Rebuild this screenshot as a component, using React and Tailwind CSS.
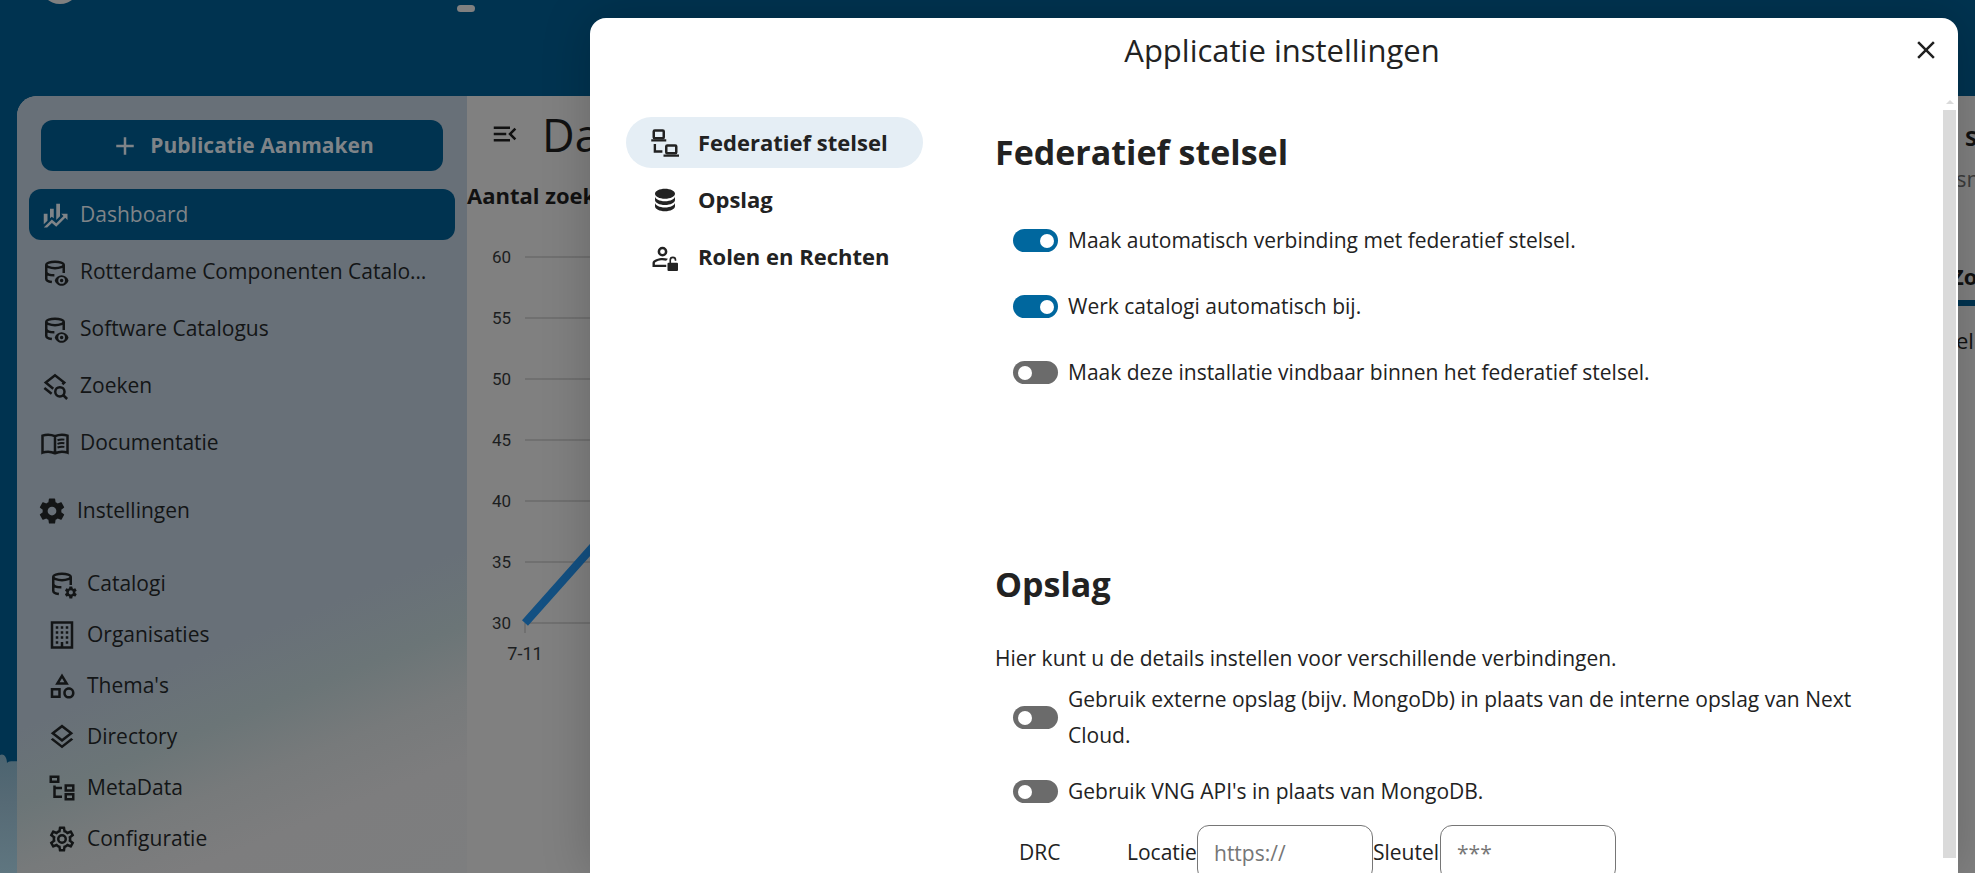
import React from "react";

const P = {
  finance: "M6,16.5L3,19.44V11H6M11,14.66L9.43,13.32L8,14.64V7H11M16,13L13,16V3H16M18.81,12.81L17,11H22V16L20.21,14.21L13,21.36L9.53,18.34L5.75,22H3L9.47,15.66L13,18.64",
  cog: "M12,15.5A3.5,3.5 0 0,1 8.5,12A3.5,3.5 0 0,1 12,8.5A3.5,3.5 0 0,1 15.5,12A3.5,3.5 0 0,1 12,15.5M19.43,12.97C19.47,12.65 19.5,12.33 19.5,12C19.5,11.67 19.47,11.34 19.43,11L21.54,9.37C21.73,9.22 21.78,8.95 21.66,8.73L19.66,5.27C19.54,5.05 19.27,4.96 19.05,5.05L16.56,6.05C16.04,5.66 15.5,5.32 14.87,5.07L14.5,2.42C14.46,2.18 14.25,2 14,2H10C9.75,2 9.54,2.18 9.5,2.42L9.13,5.07C8.5,5.32 7.96,5.66 7.44,6.05L4.95,5.05C4.73,4.96 4.46,5.05 4.34,5.27L2.34,8.73C2.21,8.95 2.27,9.22 2.46,9.37L4.57,11C4.53,11.34 4.5,11.67 4.5,12C4.5,12.33 4.53,12.65 4.57,12.97L2.46,14.63C2.27,14.78 2.21,15.05 2.34,15.27L4.34,18.73C4.46,18.95 4.73,19.03 4.95,18.95L7.44,17.94C7.96,18.34 8.5,18.68 9.13,18.93L9.5,21.58C9.54,21.82 9.75,22 10,22H14C14.25,22 14.46,21.82 14.5,21.58L14.87,18.93C15.5,18.67 16.04,18.34 16.56,17.94L19.05,18.95C19.27,19.03 19.54,18.95 19.66,18.73L21.66,15.27C21.78,15.05 21.73,14.78 21.54,14.63L19.43,12.97Z",
  cogOutline: "M12,8A4,4 0 0,1 16,12A4,4 0 0,1 12,16A4,4 0 0,1 8,12A4,4 0 0,1 12,8M12,10A2,2 0 0,0 10,12A2,2 0 0,0 12,14A2,2 0 0,0 14,12A2,2 0 0,0 12,10M10,22C9.75,22 9.54,21.82 9.5,21.58L9.13,18.93C8.5,18.68 7.96,18.34 7.44,17.94L4.95,18.95C4.73,19.03 4.46,18.95 4.34,18.73L2.34,15.27C2.21,15.05 2.27,14.78 2.46,14.63L4.57,12.97L4.5,12L4.57,11L2.46,9.37C2.27,9.22 2.21,8.95 2.34,8.73L4.34,5.27C4.46,5.05 4.73,4.96 4.95,5.05L7.44,6.05C7.96,5.66 8.5,5.32 9.13,5.07L9.5,2.42C9.54,2.18 9.75,2 10,2H14C14.25,2 14.46,2.18 14.5,2.42L14.87,5.07C15.5,5.32 16.04,5.66 16.56,6.05L19.05,5.05C19.27,4.96 19.54,5.05 19.66,5.27L21.66,8.73C21.79,8.95 21.73,9.22 21.54,9.37L19.43,11L19.5,12L19.43,13L21.54,14.63C21.73,14.78 21.79,15.05 21.66,15.27L19.66,18.73C19.54,18.95 19.27,19.04 19.05,18.95L16.56,17.95C16.04,18.34 15.5,18.68 14.87,18.93L14.5,21.58C14.46,21.82 14.25,22 14,22H10M11.25,4L10.88,6.61C9.68,6.86 8.62,7.5 7.85,8.39L5.44,7.35L4.69,8.65L6.8,10.2C6.4,11.37 6.4,12.64 6.8,13.8L4.68,15.36L5.43,16.66L7.86,15.62C8.63,16.5 9.68,17.14 10.87,17.38L11.24,20H12.76L13.13,17.39C14.32,17.14 15.37,16.5 16.14,15.62L18.57,16.66L19.32,15.36L17.2,13.81C17.6,12.64 17.6,11.37 17.2,10.2L19.31,8.65L18.56,7.35L16.15,8.39C15.38,7.5 14.32,6.86 13.12,6.62L12.75,4H11.25Z",
  shapes: "M11,13.5V21.5H3V13.5H11M9,15.5H5V19.5H9V15.5M12,2L17.5,11H6.5L12,2M12,5.86L10.08,9H13.92L12,5.86M17.5,13C20,13 22,15 22,17.5C22,20 20,22 17.5,22C15,22 13,20 13,17.5C13,15 15,13 17.5,13M17.5,15A2.5,2.5 0 0,0 15,17.5A2.5,2.5 0 0,0 17.5,20A2.5,2.5 0 0,0 20,17.5A2.5,2.5 0 0,0 17.5,15Z",
  layers: "M12,18.54L19.37,12.8L21,14.07L12,21.07L3,14.07L4.62,12.81L12,18.54M12,16L3,9L12,2L21,9L12,16M12,4.53L6.26,9L12,13.47L17.74,9L12,4.53Z",
  tree: "M12,13H7V18H12V20H5V10H7V11H12V13M8,4V6H4V4H8M10,2H2V8H10V2M20,11V13H16V11H20M22,9H14V15H22V9M20,18V20H16V18H20M22,16H14V22H22V16Z",
  menuOpen: "M21,15.61L19.59,17L14.58,12L19.59,7L21,8.39L17.44,12L21,15.61M3,6H16V8H3V6M3,13V11H13V13H3M3,18V16H16V18H3Z",
  database: "M12,3C7.58,3 4,4.79 4,7C4,9.21 7.58,11 12,11C16.42,11 20,9.21 20,7C20,4.79 16.42,3 12,3M4,9V12C4,14.21 7.58,16 12,16C16.42,16 20,14.21 20,12V9C20,11.21 16.42,13 12,13C7.58,13 4,11.21 4,9M4,14V17C4,19.21 7.58,21 12,21C16.42,21 20,19.21 20,17V14C20,16.21 16.42,18 12,18C7.58,18 4,16.21 4,14Z",
  building: "M19 3V21H13V17.5H11V21H5V3H19M15 7H17V5H15V7M11 7H13V5H11V7M7 7H9V5H7V7M15 11H17V9H15V11M11 11H13V9H11V11M7 11H9V9H7V11M15 15H17V13H15V15M11 15H13V13H11V15M7 15H9V13H7V15M7 19H9V17H7V19M15 19H17V17H15V19M21 1H3V23H21V1Z",
  plus: "M19,13H13V19H11V13H5V11H11V5H13V11H19V13Z",
  close: "M19,6.41L17.59,5L12,10.59L6.41,5L5,6.41L10.59,12L5,17.59L6.41,19L12,13.41L17.59,19L19,17.59L13.41,12L19,6.41Z",
};

function Icon({ d, children }) {
  return (
    <svg viewBox="0 0 24 24" fill="currentColor" className="size-[30px] shrink-0" aria-hidden="true">
      {d ? <path d={d} /> : children}
    </svg>
  );
}

const barrel = (
  <g fill="none" stroke="currentColor" strokeWidth="2">
    <ellipse cx="12" cy="6.3" rx="7" ry="2.6" />
    <path d="M5 6.300v11c0 1.300 1.700 2.300 4.500 2.700M5 11.700c0 1.700 2.500 2.900 6.500 2.900M19 6.300v6.500" />
  </g>
);
const DbEye = () => (
  <Icon>
    {barrel}
    <path fillRule="evenodd" d="M17.300 14.500c-2.500 0-4.700 1.700-5.500 4.200.8 2.500 3 4.300 5.500 4.300s4.700-1.800 5.500-4.300c-.8-2.500-3-4.200-5.500-4.200m0 6.900a2.700 2.700 0 1 1 0-5.400 2.700 2.700 0 0 1 0 5.400m0-1.300a1.400 1.400 0 1 0 0-2.800 1.400 1.400 0 0 0 0 2.800" />
  </Icon>
);
const DbCog = () => (
  <Icon>
    {barrel}
    <path d={P.cog} transform="translate(13.300 13) scale(0.48)" />
  </Icon>
);
const LayersSearch = () => (
  <Icon>
    <g fill="none" stroke="currentColor" strokeWidth="2">
      <path d="M10.600 14.200 4.600 9.200 12 3.400l7.400 5.800-1.500 1.400" />
      <path d="M3.500 13.600l5.800 4.600" />
      <circle cx="15.900" cy="16.600" r="3.700" />
      <path d="M18.500 19.200l3.200 3.200" />
    </g>
  </Icon>
);
const Book = () => (
  <Icon>
    <g fill="none" stroke="currentColor" strokeWidth="2">
      <path d="M12 6.500C10 5.600 8 5.300 6.500 5.300c-1.700 0-3.200.3-4.500.8v13.600c1.300-.5 2.800-.8 4.500-.8 1.500 0 3.500.4 5.500 1.300 2-.9 4-1.300 5.500-1.300 1.700 0 3.200.3 4.500.8V6.100c-1.300-.5-2.800-.8-4.500-.8-1.500 0-3.500.3-5.500 1.200zV20" />
      <path strokeWidth="1.600" d="M14 9.800c1.500-.6 3.300-.8 5.500-.5M14 12.700c1.500-.6 3.300-.8 5.500-.5M14 15.600c1.500-.6 3.300-.8 5.500-.5" />
    </g>
  </Icon>
);
const Laptops = () => (
  <Icon>
    <g fill="none" stroke="currentColor">
      <rect x="3" y="1.900" width="8" height="6.200" rx="0.800" strokeWidth="2" />
      <rect x="13" y="13.900" width="8" height="6.200" rx="0.800" strokeWidth="2" />
      <path strokeWidth="1.900" d="M1 9.900h12M10.800 22.100h12.400M3.900 12.800v6h6" />
    </g>
  </Icon>
);
const UserLock = () => (
  <Icon>
    <circle cx="10" cy="7.700" r="2.900" fill="none" stroke="currentColor" strokeWidth="2" />
    <path d="M10 12.700c-2.670 0-8 1.340-8 4V20h11v-1.900H3.900v-1.400c0-.64 3.130-2.100 6.100-2.100 1 0 2 .16 2.900.4l1.500-1.600A16 16 0 0 0 10 12.700" />
    <rect x="14" y="16.600" width="8.400" height="6.600" rx="0.800" />
    <path fill="none" stroke="currentColor" strokeWidth="1.300" d="M16.200 17v-2.600a2.100 2.100 0 0 1 4.200 0v.6" />
  </Icon>
);

const mainNav = [
  ["Dashboard", <Icon d={P.finance} />, true],
  ["Rotterdame Componenten Catalogus", <DbEye />],
  ["Software Catalogus", <DbEye />],
  ["Zoeken", <LayersSearch />],
  ["Documentatie", <Book />],
];
const settingsNav = [
  ["Catalogi", <DbCog />],
  ["Organisaties", <Icon d={P.building} />],
  ["Thema's", <Icon d={P.shapes} />],
  ["Directory", <Icon d={P.layers} />],
  ["MetaData", <Icon d={P.tree} />],
  ["Configuratie", <Icon d={P.cogOutline} />],
];

function Sidebar() {
  return (
    <nav className="flex w-[450px] shrink-0 flex-col bg-[linear-gradient(158deg,#687078_0%,#687078_66%,#6b7577_74%,#777a7b_81%,#7d7d7e_88%,#7d7e7f_100%)] text-[21px] text-[#131516]">
      <div className="px-6 pt-6">
        <button className="flex h-[51px] w-full items-center justify-center gap-[10px] rounded-xl bg-[#003350] font-bold text-[#7f8488]">
          <Icon d={P.plus} />
          Publicatie Aanmaken
        </button>
      </div>
      <ul className="mt-[18px] flex flex-col gap-[6px] px-3">
        {mainNav.map(([label, icon, active]) => (
          <li key={label}>
            <a href="#" className={`flex h-[51px] items-center gap-[10px] rounded-xl pr-6 pl-[11px] ${active ? "bg-[#003350] text-[#7f8488]" : ""}`}>
              {icon}
              <span className="truncate">{label}</span>
            </a>
          </li>
        ))}
      </ul>
      <button className="mt-[17px] ml-5 flex h-[51px] items-center gap-[10px] text-left">
        <Icon d={P.cog} />
        Instellingen
      </button>
      <ul className="mt-[22px] flex flex-col pl-[30px]">
        {settingsNav.map(([label, icon]) => (
          <li key={label}>
            <a href="#" className="flex h-[51px] items-center gap-[10px]">
              {icon}
              {label}
            </a>
          </li>
        ))}
      </ul>
    </nav>
  );
}

function Chart() {
  return (
    <svg viewBox="0 0 900 450" className="h-[450px] w-[900px]" aria-label="Aantal zoekopdrachten">
      {[60, 55, 50, 45, 40, 35, 30].map((v, i) => (
        <g key={v}>
          <line x1="58" x2="900" y1={32 + i * 61} y2={32 + i * 61} stroke="#707070" strokeWidth="2" />
          <text x="44" y={38 + i * 61} textAnchor="end" fontSize="17" fill="#1c1e20" fontFamily="Roboto, sans-serif">{v}</text>
        </g>
      ))}
      <line x1="58" x2="58" y1="398" y2="408" stroke="#707070" strokeWidth="2" />
      <path d="M58 398L123 325L300 130" stroke="#135082" strokeWidth="8" fill="none" />
      <text x="58" y="435" textAnchor="middle" fontSize="18" fill="#1c1e20" fontFamily="Roboto, sans-serif">7-11</text>
    </svg>
  );
}

function Switch({ id, checked, children }) {
  return (
    <div className="flex items-center gap-[10px] pl-[18px]">
      <span className="relative inline-flex h-[23px] w-[45px] shrink-0">
        <input id={id} type="checkbox" role="switch" defaultChecked={checked} className="peer h-full w-full appearance-none rounded-full bg-[#6b6b6b] checked:bg-[#00679e]" />
        <span className="pointer-events-none absolute top-[5px] left-[5px] size-[14px] rounded-full bg-white peer-checked:left-[27px]" />
      </span>
      <label htmlFor={id} className="leading-9">{children}</label>
    </div>
  );
}

const tabs = [
  ["Federatief stelsel", <Laptops />, true],
  ["Opslag", <Icon d={P.database} />],
  ["Rolen en Rechten", <UserLock />],
];

function Dialog() {
  return (
    <section role="dialog" aria-label="Applicatie instellingen" className="absolute top-[18px] right-[17px] bottom-0 left-[590px] flex flex-col overflow-hidden rounded-t-2xl bg-white text-[21px] text-[#222] shadow-[0_0_50px_rgba(0,0,0,0.2)]">
      <header className="relative flex h-16 items-center justify-center pl-4">
        <h2 className="text-[31px]">Applicatie instellingen</h2>
        <button aria-label="Sluiten" className="absolute top-[17px] right-[17px]">
          <Icon d={P.close} />
        </button>
      </header>
      <div className="mt-[18px] flex min-h-0 flex-1">
        <ul className="mt-[17px] ml-9 flex w-[297px] shrink-0 flex-col gap-[6px] text-[22px] font-bold">
          {tabs.map(([label, icon, active]) => (
            <li key={label}>
              <a href="#" className={`flex h-[51px] items-center gap-[18px] rounded-full pl-6 ${active ? "bg-[#e5eef5]" : ""}`}>
                {icon}
                {label}
              </a>
            </li>
          ))}
        </ul>
        <div className="ml-[72px] min-w-0 flex-1 overflow-hidden pr-[60px]">
          <h3 className="mt-[27px] text-[34px] leading-[50px] font-bold">Federatief stelsel</h3>
          <div className="mt-[45px] flex flex-col gap-[30px]">
            <Switch id="connect" checked>Maak automatisch verbinding met federatief stelsel.</Switch>
            <Switch id="update" checked>Werk catalogi automatisch bij.</Switch>
            <Switch id="findable">Maak deze installatie vindbaar binnen het federatief stelsel.</Switch>
          </div>
          <h3 className="mt-[169px] text-[34px] leading-[50px] font-bold">Opslag</h3>
          <p className="mt-[31px] leading-9">Hier kunt u de details instellen voor verschillende verbindingen.</p>
          <div className="mt-[5px] flex flex-col gap-5">
            <Switch id="external">Gebruik externe opslag (bijv. MongoDb) in plaats van de interne opslag van Next Cloud.</Switch>
            <Switch id="vng">Gebruik VNG API's in plaats van MongoDB.</Switch>
          </div>
          <div className="mt-4 flex items-center pl-6">
            <span className="w-[108px]">DRC</span>
            <label htmlFor="location" className="w-[70px]">Locatie</label>
            <input id="location" placeholder="https://" className="h-14 w-[176px] rounded-xl border border-[#767676] px-4 placeholder:text-[#767676]" />
            <label htmlFor="key" className="w-[67px]">Sleutel</label>
            <input id="key" placeholder="***" className="h-14 w-[176px] rounded-xl border border-[#767676] px-4 placeholder:text-[#767676]" />
          </div>
        </div>
        <div className="mr-[2px] flex w-[13px] flex-col items-center gap-[6px] pb-[15px]">
          <span className="border-x-4 border-b-4 border-x-transparent border-b-[#dadada]" />
          <span className="w-full flex-1 bg-[#dadada]" />
        </div>
      </div>
    </section>
  );
}

export default function App() {
  return (
    <div className="relative flex h-screen flex-col overflow-hidden bg-[#003350] font-['Open_Sans','Noto_Sans',sans-serif]">
      <svg viewBox="0 0 40 120" className="absolute bottom-0 left-0 h-[120px] w-10" aria-hidden="true">
        <defs>
          <linearGradient id="cloud" x1="0" y1="0" x2="0" y2="1">
            <stop offset="0" stopColor="#4c6470" />
            <stop offset="0.4" stopColor="#566a75" />
            <stop offset="1" stopColor="#5f7680" />
          </linearGradient>
        </defs>
        <path d="M0 2C3 0 7 3 7 10C10 7 16 9 40 9V120H0Z" fill="url(#cloud)" />
      </svg>
      <div className="absolute -top-9 left-10 size-10 rounded-full bg-[#808080]" />
      <div className="absolute top-[5px] left-[457px] h-[7px] w-[18px] rounded-sm bg-[#808080]" />
      <div className="relative mt-24 ml-[17px] flex min-h-0 flex-1 overflow-hidden rounded-tl-[20px] bg-[#808080] text-[#111]">
        <Sidebar />
        <main className="min-w-0 flex-1">
          <div className="flex h-[76px] items-center gap-[22px] pl-[23px]">
            <button aria-label="Navigatie sluiten">
              <Icon d={P.menuOpen} />
            </button>
            <h1 className="text-[45px] leading-none">Dashboard</h1>
          </div>
          <h2 className="mt-[7px] text-[22px] leading-8 font-bold">Aantal zoekopdrachten</h2>
          <div className="mt-[14px]">
            <Chart />
          </div>
        </main>
        <aside className="flex w-6 shrink-0 flex-col overflow-hidden text-[22px] leading-8 whitespace-nowrap">
          <strong className="mt-[25px] pl-[14px]">Snel</strong>
          <span className="mt-[9px] pl-[5px] text-[#3c3c3c]">snel</span>
          <strong className="mt-[66px] border-b-[6px] border-[#003350] pb-2">Zoeken</strong>
          <span className="mt-[18px] pl-[5px]">el</span>
        </aside>
      </div>
      <Dialog />
    </div>
  );
}
